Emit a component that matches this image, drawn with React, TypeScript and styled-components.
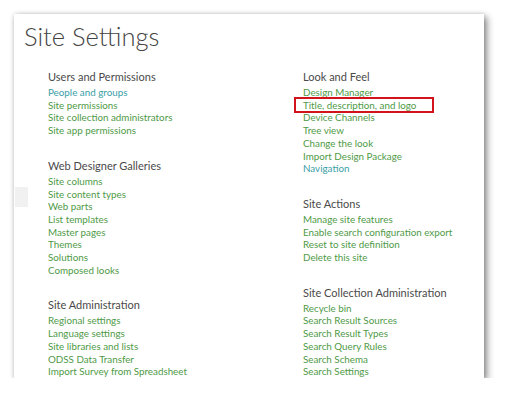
import styled, { createGlobalStyle } from 'styled-components';

type Section = { title: string; links: string[]; visited?: string[]; marked?: string };

const leftColumn: Section[] = [
	{
		title: 'Users and Permissions',
		links: ['People and groups', 'Site permissions', 'Site collection administrators', 'Site app permissions'],
		visited: ['People and groups'],
	},
	{
		title: 'Web Designer Galleries',
		links: [
			'Site columns',
			'Site content types',
			'Web parts',
			'List templates',
			'Master pages',
			'Themes',
			'Solutions',
			'Composed looks',
		],
	},
	{
		title: 'Site Administration',
		links: [
			'Regional settings',
			'Language settings',
			'Site libraries and lists',
			'ODSS Data Transfer',
			'Import Survey from Spreadsheet',
		],
	},
];

const rightColumn: Section[] = [
	{
		title: 'Look and Feel',
		links: [
			'Design Manager',
			'Title, description, and logo',
			'Device Channels',
			'Tree view',
			'Change the look',
			'Import Design Package',
			'Navigation',
		],
		visited: ['Navigation'],
		marked: 'Title, description, and logo',
	},
	{
		title: 'Site Actions',
		links: ['Manage site features', 'Enable search configuration export', 'Reset to site definition', 'Delete this site'],
	},
	{
		title: 'Site Collection Administration',
		links: [
			'Recycle bin',
			'Search Result Sources',
			'Search Result Types',
			'Search Query Rules',
			'Search Schema',
			'Search Settings',
		],
	},
];

export default function App() {
	return (
		<>
			<GlobalStyle />
			<Card>
				<SideTab />
				<PageTitle>Site Settings</PageTitle>
				<Columns>
					{[leftColumn, rightColumn].map((column, i) => (
						<Column key={i}>
							{column.map((section) => (
								<Group key={section.title}>
									<GroupTitle>{section.title}</GroupTitle>
									{section.links.map((link) => (
										<LinkItem
											key={link}
											href="#"
											$visited={section.visited?.includes(link)}
											$marked={section.marked === link}
										>
											{link}
										</LinkItem>
									))}
								</Group>
							))}
						</Column>
					))}
				</Columns>
			</Card>
		</>
	);
}

const GlobalStyle = createGlobalStyle`
	body {
		margin: 0;
		background: #ffffff;
		font-family: Lato, "Open Sans", sans-serif;
	}
`;

const Card = styled.div`
	position: relative;
	box-sizing: border-box;
	width: 470px;
	height: 364px;
	margin: 14px 0 0 14px;
	padding: 4px 0 0 10px;
	background: #ffffff;
	box-shadow: 3px 3px 7px rgba(0, 0, 0, 0.45), 0 0 4px rgba(0, 0, 0, 0.15);
`;

const SideTab = styled.div`
	position: absolute;
	left: 1px;
	top: 173px;
	width: 13px;
	height: 20px;
	background: #f1f1f1;
`;

const PageTitle = styled.h1`
	margin: 0;
	font-size: 25.5px;
	font-weight: 300;
	line-height: 36px;
	color: #444444;
`;

const Columns = styled.div`
	display: grid;
	grid-template-columns: 255px 200px;
	margin: 14px 0 0 24px;
`;

const Column = styled.div`
	display: flex;
	flex-direction: column;
	gap: 20px;
`;

const Group = styled.div`
	display: flex;
	flex-direction: column;
	align-items: flex-start;
`;

const GroupTitle = styled.div`
	margin-bottom: 1px;
	font-size: 11px;
	line-height: 17px;
	color: #4a4a4a;
	white-space: nowrap;
`;

const LinkItem = styled.a<{ $visited?: boolean; $marked?: boolean }>`
	position: relative;
	font-size: 9.8px;
	line-height: 12.7px;
	color: ${({ $visited }) => ($visited ? '#3a9ea6' : '#4f9a47')};
	text-decoration: none;
	white-space: nowrap;

	${({ $marked }) =>
		$marked &&
		`
		&::after {
			content: '';
			position: absolute;
			left: -9px;
			top: -2px;
			width: 140px;
			height: 16px;
			box-sizing: border-box;
			border: 2px solid #d3131b;
		}
	`}
`;
